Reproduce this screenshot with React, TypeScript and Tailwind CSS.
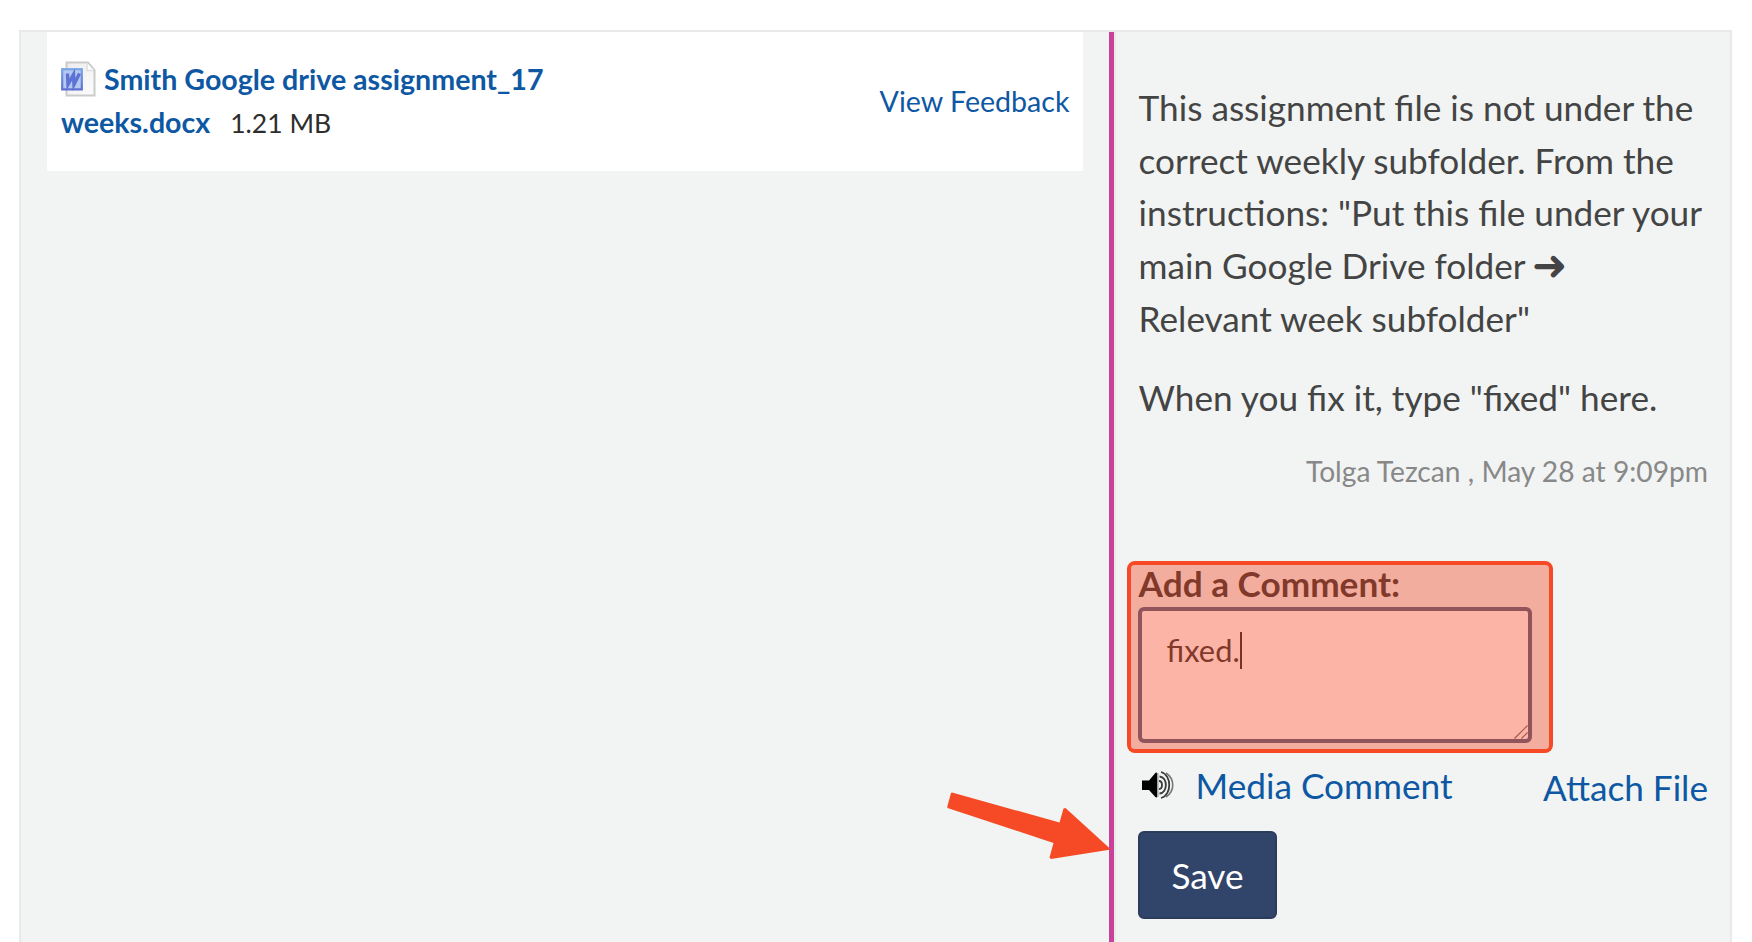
import React from "react";

function WordFileIcon() {
  return (
    <svg width="35" height="36" viewBox="0 0 35 36" className="block shrink-0" aria-hidden="true">
      <defs>
        <linearGradient id="sheet" x1="0" y1="0" x2="1" y2="1">
          <stop offset="0" stopColor="#ececee" />
          <stop offset="1" stopColor="#fcfcfc" />
        </linearGradient>
        <linearGradient id="badge" x1="0" y1="0" x2="0" y2="1">
          <stop offset="0" stopColor="#78a6e4" />
          <stop offset="1" stopColor="#5f6fd2" />
        </linearGradient>
      </defs>
      <path d="M5.500 1.500H27L33.500 9V34.500H5.500Z" fill="url(#sheet)" stroke="#cbcbcb" strokeWidth="2" />
      <path d="M26 2V9.500H33" fill="#fff" stroke="#dedede" strokeWidth="1.500" />
      <rect x="1.200" y="8.200" width="19.600" height="20.200" fill="#b4c8f0" stroke="url(#badge)" strokeWidth="2.200" />
      <path d="M6.500 12.500L7 23.500L12.500 13.500L13 23.500L18.500 12.500" fill="none" stroke="#5c72d4" strokeWidth="3.400" />
    </svg>
  );
}

function SpeakerIcon() {
  return (
    <svg width="34" height="30" viewBox="0 0 34 30" className="block shrink-0" aria-hidden="true">
      <path d="M1 10.500H8L13.500 4C15.500 1.500 16 2.500 16 4V26C16 27.500 15.500 28.500 13.500 26L8 20H1Z" fill="#000" />
      <g fill="none" stroke="#3a3a3a" strokeWidth="1.800">
        <path d="M18 11C22 11 22 19 18 19" />
        <path d="M18.500 6.500C27 7 27 23 18.500 23.500" />
        <path d="M20 2C31 5 31 25 20 28" />
        <path d="M25 3C34 9 34 21 25 27" strokeWidth="1.600" stroke="#777" />
      </g>
      <path d="M16.800 3V27" stroke="#999" strokeWidth="1.400" />
    </svg>
  );
}

function PointerArrow() {
  return (
    <svg width="165" height="67" viewBox="0 0 165 67" className="absolute left-[947px] top-[792px]" aria-hidden="true">
      <path
        d="M5 .5L112.500 30.500L116.500 16.500L118.500 16L164 57.500L104 67L102.500 65.500L106.500 51L.5 16L.3 14.500L4 1Z"
        fill="#f54a25"
      />
    </svg>
  );
}

export default function App() {
  return (
    <div className="relative flex h-[942px] w-[1752px] overflow-hidden bg-white pl-[19px] pt-[30px] font-['Lato',sans-serif] text-[#444]">
      <div className="flex w-[1713px] border-x-2 border-t-2 border-[#e8eaea] bg-[#f1f4f3]">
        <main className="w-[1088px] pl-[26px]">
          <div className="flex h-[139px] w-[1036px] items-center justify-between bg-white pl-[14px] pr-[13.5px] text-[28.6px] leading-[43px]">
            <div className="w-[500px] pb-px">
              <div className="flex items-center font-bold text-[#0e58a3]">
                <WordFileIcon />
                <a className="ml-[8px] whitespace-nowrap">Smith Google drive assignment_17</a>
              </div>
              <a className="font-bold text-[#0e58a3]">weeks.docx</a>
              <span className="ml-[20px] text-[26.5px] text-[#2d2d2d]">1.21 MB</span>
            </div>
            <a className="whitespace-nowrap text-[#0e58a3]">View Feedback</a>
          </div>
        </main>
        <aside className="w-[621px] border-l-[5px] border-[#c74298]">
          <div className="flex h-full flex-col border-l-2 border-[#e8eaea] pl-[22px] pr-[22px] pt-[48.8px]">
            <div className="whitespace-nowrap pl-[0.6px] text-[35.2px] leading-[52.8px]">
              <p>
                This assignment file is not under the
                <br />
                correct weekly subfolder. From the
                <br />
                instructions: "Put this file under your
                <br />
                main Google Drive folder{" "}
                <span className="relative top-px ml-[-2px] font-['DejaVu_Sans'] text-[42px] leading-[0]">➜</span>
                <br />
                Relevant week subfolder"
              </p>
              <p className="mt-[26px]">When you fix it, type "fixed" here.</p>
            </div>
            <div className="mt-[26px] text-right text-[28.2px] leading-[42px] text-[#888]">
              Tolga Tezcan , May 28 at 9:09pm
            </div>

            <div className="relative mt-[70.4px] h-[180px] w-[394px]">
              <div className="pl-[0.6px] text-[35.2px] font-bold leading-[42px] text-[#2f2f2f]">Add a Comment:</div>
              <div className="relative mt-[3px] flex h-[136px] w-[394px] rounded-[6px] border-4 border-[#4a5c80] bg-white pl-[24.6px] pt-[17px] text-[30.8px] leading-[46px] text-[#2f2f2f]">
                <span>fixed.</span>
                <span className="mt-[4px] h-[37px] w-[2px] bg-[#222]" />
                <svg width="14" height="14" viewBox="0 0 14 14" className="absolute bottom-0 right-0" aria-hidden="true">
                  <path d="M.5 13.500L13.500.5M7.500 13.500L13.500 7.500" stroke="#666" strokeWidth="1.200" />
                </svg>
              </div>
              <div className="absolute left-[-11px] top-[-1px] h-[192px] w-[426px] rounded-[8px] border-4 border-[#f54a25] bg-[#f54a25]/41 bg-clip-padding" />
            </div>

            <div className="mt-[17px] flex h-[53px] items-center justify-between text-[35.2px] text-[#0e58a3]">
              <div className="flex items-center gap-[20.6px]">
                <div className="pl-[3px]">
                  <SpeakerIcon />
                </div>
                <a>Media Comment</a>
              </div>
              <a className="pt-[4px]">Attach File</a>
            </div>
            <button className="mt-[19px] h-[88px] w-[139px] rounded-[6px] border-2 border-[#2b3c5d] bg-[#31446a] text-[35.2px] text-white">
              Save
            </button>
          </div>
        </aside>
      </div>
      <PointerArrow />
    </div>
  );
}
